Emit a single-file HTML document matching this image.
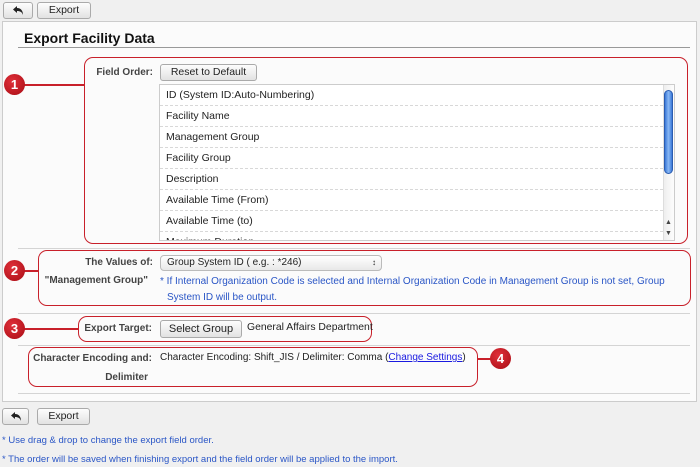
<!DOCTYPE html>
<html><head><meta charset="utf-8"><style>
*{margin:0;padding:0;box-sizing:border-box}
body{width:700px;height:467px;background:#f0f0f0;font-family:"Liberation Sans",sans-serif;font-size:10.4px;color:#222;position:relative;overflow:hidden}
.a{position:absolute;white-space:nowrap}
.btn{position:absolute;border:1px solid #aaa;border-radius:3px;background:linear-gradient(#fdfdfd,#e2e2e2);text-align:center;font-size:10.5px;color:#222}
.red{position:absolute;border:1.5px solid #c8202a;border-radius:9px}
.circ{position:absolute;width:21px;height:21px;border-radius:50%;background:radial-gradient(circle at 40% 35%,#e0303a,#a80c14);color:#fff;font-weight:bold;font-size:13px;text-align:center;line-height:21px}
.ln{position:absolute;height:1.5px;background:#c8202a}
.hr{position:absolute;height:1px;background:#d4d4d4;left:18px;width:672px}
.lab{position:absolute;font-weight:bold;color:#444;text-align:right;white-space:nowrap;font-size:10px}
.row{position:absolute;left:0;width:503px;height:21px;border-bottom:1px dashed #d8d8d8;padding-left:6px;line-height:20px;font-size:10.5px}
.blue{color:#2a56c6}
</style></head><body>
<div class="btn" style="left:3px;top:2px;width:30px;height:17px"><svg width="12" height="11" viewBox="0 0 12 11" style="margin-top:2px"><path d="M5 1 L1 4.5 L5 8 V6 C8 6 10 7 11 10 C11 6 9 3 5 3 Z" fill="#222"/></svg></div>
<div class="btn" style="left:37px;top:2px;width:54px;height:17px;line-height:15px">Export</div>

<div class="a" style="left:2px;top:21px;width:695px;height:381px;background:#fbfbfb;border:1px solid #ccc"></div>
<div class="a" style="left:24px;top:30px;font-size:14px;font-weight:bold;color:#111">Export Facility Data</div>
<div class="a" style="left:18px;top:47px;width:672px;height:1px;background:#999"></div>

<div class="red" style="left:84px;top:57px;width:604px;height:187px"></div>
<div class="ln" style="left:22px;top:84px;width:62px"></div>
<div class="circ" style="left:4px;top:74px">1</div>
<div class="lab" style="left:90px;top:67px;width:63px">Field Order:</div>
<div class="btn" style="left:160px;top:64px;width:97px;height:17px;line-height:15px">Reset to Default</div>
<div class="a" style="left:159px;top:84px;width:516px;height:157px;background:#fff;border:1px solid #ccc;overflow:hidden">
<div class="row" style="top:0">ID (System ID:Auto-Numbering)</div>
<div class="row" style="top:21px">Facility Name</div>
<div class="row" style="top:42px">Management Group</div>
<div class="row" style="top:63px">Facility Group</div>
<div class="row" style="top:84px">Description</div>
<div class="row" style="top:105px">Available Time (From)</div>
<div class="row" style="top:126px">Available Time (to)</div>
<div class="row" style="top:147px">Maximum Duration</div>
<div class="a" style="left:503px;top:0;width:12px;height:155px;background:linear-gradient(90deg,#eee,#fff);border-left:1px solid #ddd"></div>
<div class="a" style="left:504px;top:5px;width:9px;height:84px;border-radius:5px;background:linear-gradient(90deg,#3a78d8,#8ab8f4,#3a78d8);border:1px solid #2a5cb0"></div>
<div class="a" style="left:505px;top:134px;font-size:7px;color:#444">&#9650;</div>
<div class="a" style="left:505px;top:145px;font-size:7px;color:#444">&#9660;</div>
</div>
<div class="hr" style="top:248px"></div>

<div class="red" style="left:38px;top:250px;width:653px;height:56px"></div>
<div class="ln" style="left:22px;top:270px;width:16px"></div>
<div class="circ" style="left:4px;top:260px">2</div>
<div class="lab" style="left:40px;top:257px;width:113px">The Values of:</div>
<div class="lab" style="left:40px;top:275px;width:108px">"Management Group"</div>
<div class="a" style="left:160px;top:255px;width:222px;height:16px;border:1px solid #bbb;border-radius:4px;background:linear-gradient(#fff,#e8e8e8);font-size:10px;padding-left:6px;line-height:14px">Group System ID ( e.g. : *246)<span style="position:absolute;right:5px;top:0;font-size:8px">&#x2195;</span></div>
<div class="a blue" style="left:160px;top:276px;font-size:10px">* If Internal Organization Code is selected and Internal Organization Code in Management Group is not set, Group</div>
<div class="a blue" style="left:167px;top:292px;font-size:10px">System ID will be output.</div>
<div class="hr" style="top:313px"></div>

<div class="red" style="left:78px;top:316px;width:294px;height:26px"></div>
<div class="ln" style="left:22px;top:328px;width:56px"></div>
<div class="circ" style="left:4px;top:318px">3</div>
<div class="lab" style="left:80px;top:323px;width:72px">Export Target:</div>
<div class="btn" style="left:160px;top:320px;width:82px;height:18px;line-height:16px;font-size:11px">Select Group</div>
<div class="a" style="left:247px;top:322px">General Affairs Department</div>
<div class="hr" style="top:345px"></div>

<div class="red" style="left:28px;top:347px;width:450px;height:40px"></div>
<div class="ln" style="left:478px;top:358px;width:14px"></div>
<div class="circ" style="left:490px;top:348px">4</div>
<div class="lab" style="left:30px;top:353px;width:122px">Character Encoding and:</div>
<div class="lab" style="left:30px;top:372px;width:118px">Delimiter</div>
<div class="a" style="left:160px;top:352px;font-size:10px">Character Encoding: Shift_JIS / Delimiter: Comma (<span style="color:#1a1ae0;text-decoration:underline">Change Settings</span>)</div>
<div class="hr" style="top:393px"></div>

<div class="btn" style="left:2px;top:408px;width:27px;height:17px"><svg width="12" height="11" viewBox="0 0 12 11" style="margin-top:2px"><path d="M5 1 L1 4.5 L5 8 V6 C8 6 10 7 11 10 C11 6 9 3 5 3 Z" fill="#222"/></svg></div>
<div class="btn" style="left:37px;top:408px;width:53px;height:17px;line-height:15px">Export</div>
<div class="a blue" style="left:2px;top:435px;font-size:9.5px">* Use drag &amp; drop to change the export field order.</div>
<div class="a blue" style="left:2px;top:454px;font-size:9.5px">* The order will be saved when finishing export and the field order will be applied to the import.</div>
</body></html>
